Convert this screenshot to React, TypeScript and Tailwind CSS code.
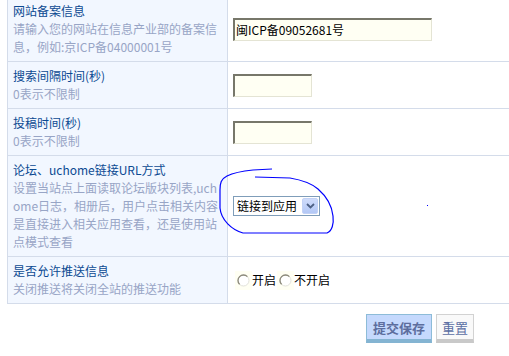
import React from 'react';

const font = "font-['Noto_Sans_CJK_SC','Noto_Sans',sans-serif]";

type Row = {
  title: string;
  desc: string[];
  field: React.ReactNode;
};

const TextInput: React.FC<{ value?: string; width: string }> = ({ value, width }) => (
  <div
    className={`${width} h-[23px] bg-[#fffff3] border-t-2 border-l-2 border-b border-r border-t-[#77776a] border-l-[#77776a] border-b-[#e4e4d4] border-r-[#e4e4d4] px-[1px] text-[12px] leading-[20px] text-black whitespace-nowrap overflow-hidden`}
  >
    {value}
  </div>
);

const FakeSelect: React.FC = () => (
  <div className="w-[87px] h-[20px] border border-[#7f9db9] bg-white flex items-center justify-between pl-[3px] pr-[1px]">
    <span className="text-[12px] leading-[18px] text-black">链接到应用</span>
    <span className="w-[16px] h-[16px] flex items-center justify-center bg-gradient-to-b from-[#cfdcfb] to-[#b3c8f6] border border-[#c2d2f6] rounded-[2px]">
      <svg width="9" height="6" viewBox="0 0 9 6">
        <path d="M1 1 L4.5 4.5 L8 1" fill="none" stroke="#4d6185" strokeWidth="1.8" />
      </svg>
    </span>
  </div>
);

const Radio: React.FC<{ label: string }> = ({ label }) => (
  <label className="flex items-center">
    <span className="w-[17px] h-[19px] bg-[#fffff3] flex items-center justify-center">
      <svg width="13" height="13" viewBox="0 0 13 13">
        <circle cx="6.5" cy="6.5" r="5.5" fill="#fff" stroke="#e2e2da" strokeWidth="1" />
        <path d="M2.6 10.4 A5.5 5.5 0 0 1 10.4 2.6" fill="none" stroke="#8b897a" strokeWidth="1.3" />
      </svg>
    </span>
    <span className="text-[12px] leading-[18px] text-black">{label}</span>
  </label>
);

const rows: Row[] = [
  {
    title: '网站备案信息',
    desc: ['请输入您的网站在信息产业部的备案信', '息，例如:京ICP备04000001号'],
    field: <TextInput value="闽ICP备09052681号" width="w-[199px]" />,
  },
  {
    title: '搜索间隔时间(秒)',
    desc: ['0表示不限制'],
    field: <TextInput width="w-[79px]" />,
  },
  {
    title: '投稿时间(秒)',
    desc: ['0表示不限制'],
    field: <TextInput width="w-[79px]" />,
  },
  {
    title: '论坛、uchome链接URL方式',
    desc: [
      '设置当站点上面读取论坛版块列表,uch',
      'ome日志，相册后，用户点击相关内容',
      '是直接进入相关应用查看，还是使用站',
      '点模式查看',
    ],
    field: <FakeSelect />,
  },
  {
    title: '是否允许推送信息',
    desc: ['关闭推送将关闭全站的推送功能'],
    field: (
      <div className="flex items-center gap-[1px] pl-[2px]">
        <Radio label="开启" />
        <Radio label="不开启" />
      </div>
    ),
  },
];

export default function App() {
  return (
    <div className={`relative w-[509px] h-[356px] overflow-hidden bg-white ${font}`}>
      <div className="-mt-[4px] ml-[7px] w-[520px] border-l border-b border-[#d4dcea]">
        {rows.map((row) => (
          <div key={row.title} className="flex border-t border-[#d4dcea]">
            <div className="w-[220px] shrink-0 bg-[#f2f7ff] border-r border-[#d4dcea] pl-[5px] pr-[2px] py-[5px] text-[12px] leading-[18px]">
              <div className="text-[#0c4a92] whitespace-nowrap">{row.title}</div>
              {row.desc.map((line) => (
                <div key={line} className="text-[#98a5c6] whitespace-nowrap">
                  {line}
                </div>
              ))}
            </div>
            <div className="flex-1 flex items-center pl-[5px]">{row.field}</div>
          </div>
        ))}
      </div>

      <div className="flex gap-[4px] pl-[366px] pt-[10px]">
        <button className="h-[29px] w-[66px] bg-[#c5d9fd] border border-[#8dbcd8] border-b-[4px] border-b-[#84b4d2] text-[13px] font-bold text-[#5d6e9e] leading-none">
          提交保存
        </button>
        <button className="h-[29px] w-[38px] bg-[#f9f9f9] border border-[#d2d2d2] border-b-[4px] border-b-[#c9c9c9] text-[13px] text-[#5c6fa4] leading-none">
          重置
        </button>
      </div>

      {/* hand-drawn marker over the select */}
      <svg className="absolute left-0 top-0 pointer-events-none" width="509" height="356" viewBox="0 0 509 356">
        <path
          d="M272 169 L253 170 C243 171 233 173 227 176 C221 179 220 183 220 190 L220 208 C221 220 232 230 243 233 L327 233 C332 231 334 224 333 216 C332 206 326 196 318 189 C311 183 302 180 290 178 L255 177"
          fill="none"
          stroke="#0000ff"
          strokeWidth="1.2"
        />
        <rect x="427" y="205" width="1" height="1" fill="#0000ff" />
      </svg>
    </div>
  );
}
